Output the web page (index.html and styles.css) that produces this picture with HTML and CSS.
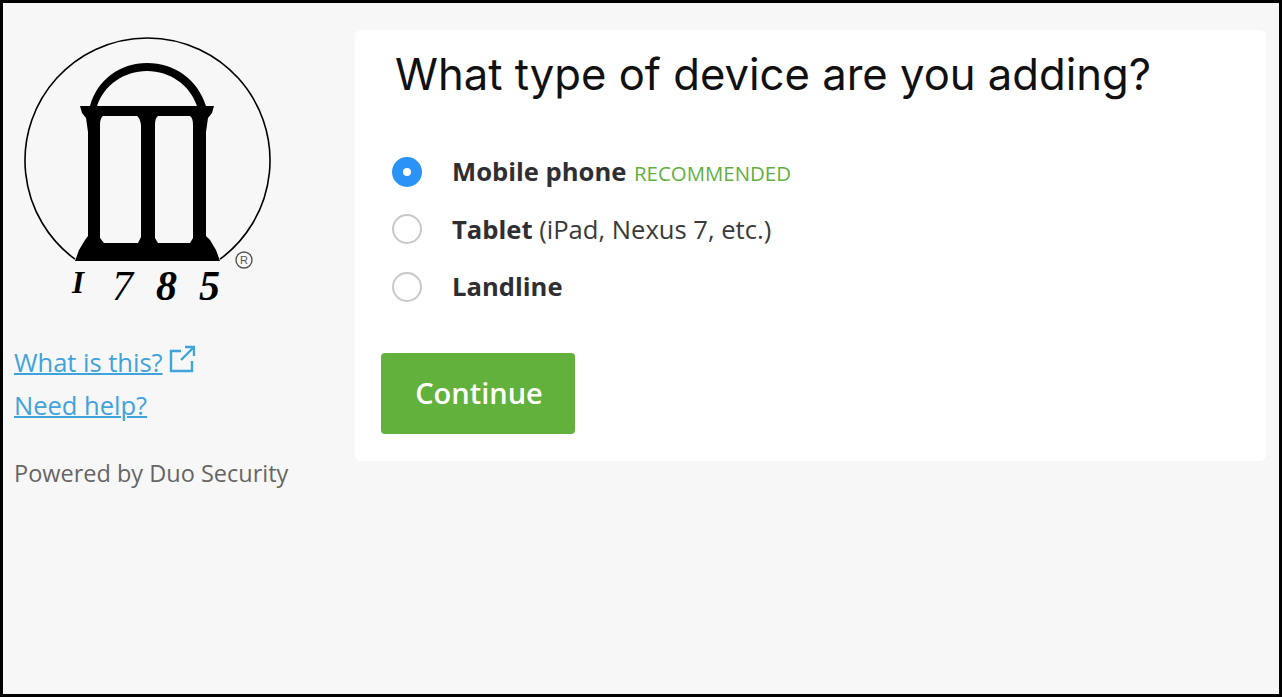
FILE: index.html
```html
<!DOCTYPE html>
<html lang="en">
<head>
    <meta charset="UTF-8">
    <title>Device type</title>
    <link rel="stylesheet" href="styles.css">
</head>
<body>
    <div class="frame">
        <div class="sidebar">
            <svg class="logo" width="300" height="310" viewBox="0 0 300 310">
                <path class="logo-ring" d="M75 259.2 A122.5 122.5 0 1 1 220 259.2"/>
                <path d="M90 106 C97 80 120 63 147 63 C175 63 198 80 206 106 H197 C190 85 170 71 147 71 C124 71 104 85 97 106 Z"/>
                <path fill-rule="evenodd" d="M80 106 H214 L212 113 L208 118 L206 132 V236 L210 240 L216 250 L220 261 H75 L79 250 L85 240 L88 236 V132 L86 118 L82 113 Z
                    M103 116 H137 Q140 118 141 125 V237 L138 243 H104 L100 238 V125 Q100 118 103 116 Z
                    M158 116 H190 Q193 118 193 125 V238 L190 243 H158 L155 238 V125 Q155 118 158 116 Z"/>
                <text class="logo-year small" x="72" y="293">I</text>
                <text class="logo-year thin" x="112" y="300">7</text>
                <text class="logo-year" x="156" y="300">8</text>
                <text class="logo-year" x="199" y="300">5</text>
                <circle class="logo-reg" cx="244" cy="260" r="8"/>
                <text class="logo-reg-r" x="244" y="264">R</text>
            </svg>
            <p class="side-link"><a href="#">What is this?</a>
                <svg class="ext-icon" width="26" height="28" viewBox="0 0 26 28">
                    <path d="M12 6 H2 V26 H23 V16"/>
                    <path d="M12 15 L24 3 M16 2 H25 V11"/>
                </svg>
            </p>
            <p class="side-link"><a href="#">Need help?</a></p>
            <p class="powered">Powered by Duo Security</p>
        </div>
        <div class="card">
            <h1>What type of device are you adding?</h1>
            <div class="options">
                <div class="option"><span class="radio checked"></span><span class="option-text"><b>Mobile phone</b> <span class="recommended">RECOMMENDED</span></span></div>
                <div class="option"><span class="radio"></span><span class="option-text"><b>Tablet</b> (iPad, Nexus 7, etc.)</span></div>
                <div class="option"><span class="radio"></span><span class="option-text"><b>Landline</b></span></div>
            </div>
            <button type="button">Continue</button>
        </div>
    </div>
</body>
</html>
```
FILE: styles.css
```css
html, body {
    margin: 0;
    height: 100%;
}

body {
    font-family: "Open Sans", sans-serif;
    color: #333;
}

.frame {
    box-sizing: border-box;
    height: 697px;
    display: flex;
    align-items: flex-start;
    border: 3px solid #000;
    background-color: #f7f7f7;
}

.sidebar {
    width: 352px;
    flex-shrink: 0;
}

.logo {
    display: block;
    margin: -3px 0 0 -3px;
}

.logo-ring {
    fill: none;
    stroke: #000;
    stroke-width: 1.6;
}

.logo-year {
    font-family: "Liberation Serif", serif;
    font-style: italic;
    font-weight: bold;
    font-size: 42px;
}

.logo-year.thin {
    font-weight: normal;
}

.logo-year.small {
    font-size: 31px;
}

.logo-reg {
    fill: none;
    stroke: #555;
    stroke-width: 1.4;
}

.logo-reg-r {
    font-family: "Liberation Sans", sans-serif;
    font-size: 11px;
    text-anchor: middle;
    fill: #555;
}

.side-link {
    display: flex;
    align-items: flex-start;
    margin: 0 0 0 11px;
    height: 43px;
    font-size: 25.5px;
    line-height: 33px;
}

.side-link:first-of-type {
    margin-top: 36px;
}

.side-link a {
    color: #3fa3dc;
    text-decoration: underline;
    text-decoration-thickness: 2px;
}

.ext-icon {
    margin: -1px 0 0 6px;
    fill: none;
    stroke: #3fa3dc;
    stroke-width: 2.4;
}

.powered {
    margin: 25px 0 0 11px;
    font-size: 23.5px;
    line-height: 32px;
    color: #666;
}

.card {
    box-sizing: border-box;
    width: 911px;
    height: 431px;
    margin-top: 27px;
    padding: 0 26px;
    background-color: #fff;
    border-radius: 6px;
}

h1 {
    margin: 14px 0 0 14px;
    font-family: Inter, sans-serif;
    font-weight: 400;
    font-size: 43.6px;
    line-height: 62px;
    color: #111;
}

.options {
    margin: 37px 0 0 11px;
}

.option {
    display: flex;
    align-items: center;
    height: 57.5px;
}

.radio {
    box-sizing: border-box;
    width: 30px;
    height: 30px;
    margin-right: 30px;
    border: 2px solid #c8c8c8;
    border-radius: 50%;
    background-color: #fff;
}

.radio.checked {
    border: 11px solid #2b93f5;
}

.option-text {
    font-size: 25.6px;
    color: #3a3a3a;
}

.option-text b {
    color: #2e2e33;
}

.recommended {
    margin-left: 1px;
    font-size: 20.4px;
    color: #5fb040;
}

button {
    display: block;
    width: 194px;
    height: 81px;
    margin-top: 37px;
    padding: 0 0 2px 2px;
    border: none;
    border-radius: 4px;
    background-color: #62b13c;
    color: #fff;
    font-family: "Open Sans", sans-serif;
    font-weight: 600;
    font-size: 29px;
}
```
